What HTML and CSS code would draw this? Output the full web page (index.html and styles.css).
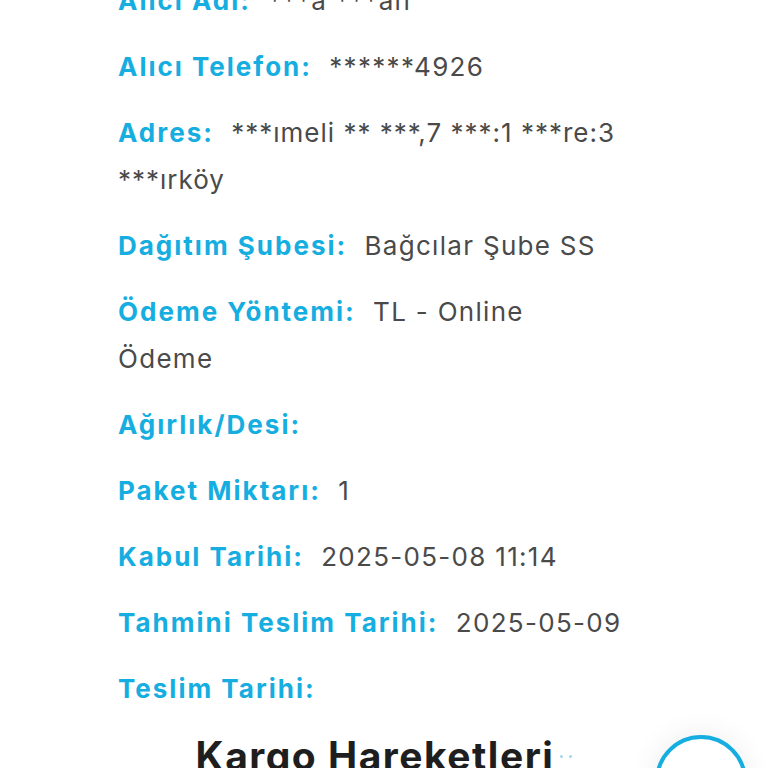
FILE: index.html
```html
<!DOCTYPE html>
<html lang="tr">
<head>
  <meta charset="UTF-8">
  <meta name="viewport" content="width=device-width, initial-scale=1.0">
  <title>Kargo Takip</title>
  <link rel="stylesheet" href="styles.css">
</head>
<body>
<div class="page">
  <div class="details">
    <p class="row"><span class="label">Alıcı Adı:</span> <span class="value">***a ***an</span></p>
    <p class="row"><span class="label">Alıcı Telefon:</span> <span class="value">******4926</span></p>
    <p class="row"><span class="label">Adres:</span> <span class="value address">***ımeli ** ***,7 ***:1 ***re:3 ***ırköy</span></p>
    <p class="row"><span class="label">Dağıtım Şubesi:</span> <span class="value">Bağcılar Şube SS</span></p>
    <p class="row"><span class="label">Ödeme Yöntemi:</span> <span class="value">TL - Online Ödeme</span></p>
    <p class="row"><span class="label">Ağırlık/Desi:</span> <span class="value"></span></p>
    <p class="row"><span class="label">Paket Miktarı:</span> <span class="value">1</span></p>
    <p class="row"><span class="label">Kabul Tarihi:</span> <span class="value">2025-05-08 11:14</span></p>
    <p class="row"><span class="label">Tahmini Teslim Tarihi:</span> <span class="value">2025-05-09</span></p>
    <p class="row"><span class="label">Teslim Tarihi:</span> <span class="value"></span></p>
  </div>
  <h2 class="section-title">Kargo Hareketleri<span class="dots"><i></i><i></i></span></h2>
</div>
<button class="float-btn" aria-label="Destek"></button>
</body>
</html>
```

FILE: styles.css
```css
body {
  margin: 0;
  background: #fff;
  font-family: Inter, "Open Sans", Arial, sans-serif;
  color: #444;
  overflow: hidden;
}
.page {
  width: 532px;
  margin: -23px auto 0;
}
.details {
  padding-right: 26px;
}
.row {
  margin: 0 0 19px;
  font-size: 26px;
  line-height: 47px;
}
.label {
  color: #16ade0;
  font-weight: 700;
  letter-spacing: 2px;
  margin-right: 10px;
}
.value {
  color: #4a4a4a;
  letter-spacing: 1.3px;
}
.value.address {
  letter-spacing: 1px;
}
.section-title {
  margin: 20px 0 0;
  text-align: center;
  font-size: 39px;
  font-weight: 700;
  letter-spacing: 1.5px;
  color: #1e1e1e;
}
.dots i {
  display: inline-block;
  width: 3px;
  height: 3px;
  margin-left: 6px;
  vertical-align: 0.3em;
  border-radius: 50%;
  background: #9fd8ec;
}
.float-btn {
  position: fixed;
  right: 21px;
  top: 735px;
  width: 92px;
  height: 92px;
  border-radius: 50%;
  border: 4px solid #16ade0;
  background: #fff;
  box-shadow: 0 0 30px rgba(0,0,0,0.08);
}
```
